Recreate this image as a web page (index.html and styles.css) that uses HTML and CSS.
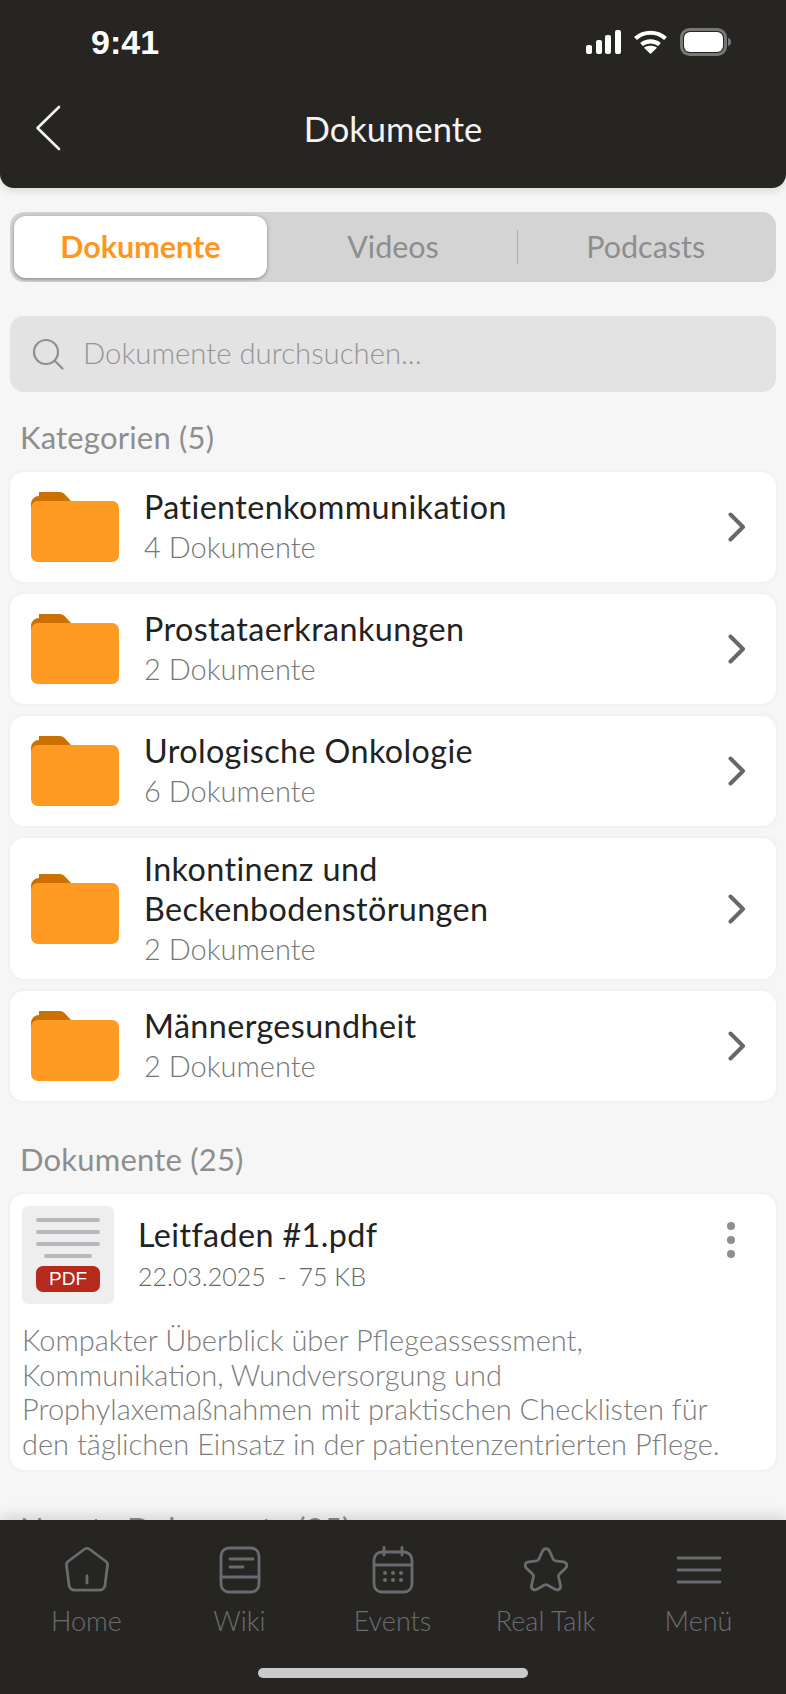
FILE: index.html
```html
<!DOCTYPE html>
<html lang="de">
<head>
    <meta charset="UTF-8">
    <meta name="viewport" content="width=device-width, initial-scale=1.0">
    <title>Dokumente</title>
    <link rel="stylesheet" href="styles.css">
</head>
<body>
    <div class="app">
        <header class="header">
            <div class="status-bar">
                <span class="time">9:41</span>
                <div class="status-icons">
                    <svg width="35" height="24" viewBox="0 0 35 24" fill="#fff">
                        <rect x="0" y="15" width="6" height="9" rx="2"/>
                        <rect x="10" y="10" width="6" height="14" rx="2"/>
                        <rect x="19" y="5" width="6" height="19" rx="2"/>
                        <rect x="29" y="0" width="6" height="24" rx="2"/>
                    </svg>
                    <svg width="33" height="24" viewBox="0 0 33 24" fill="none" stroke="#fff" stroke-width="4.200">
                        <path d="M1.500 8.500C10 .8 23 .8 31.500 8.500"/>
                        <path d="M7.500 14.500C12.500 10.300 20.500 10.300 25.500 14.500"/>
                        <path d="M16.500 24L10 17.800C13.500 15.200 19.500 15.200 23 17.800Z" fill="#fff" stroke="none"/>
                    </svg>
                    <svg width="52" height="28" viewBox="0 0 52 28">
                        <rect x="1.500" y="1.500" width="44" height="25" rx="8" fill="none" stroke="#77777a" stroke-width="3"/>
                        <rect x="4" y="4" width="39" height="20" rx="6" fill="#fff"/>
                        <path d="M48 10c2 .5 3 2 3 4s-1 3.500-3 4z" fill="#77777a"/>
                    </svg>
                </div>
            </div>
            <div class="title-bar">
                <svg class="back" width="26" height="46" viewBox="0 0 26 46" fill="none" stroke="#f4f4f4" stroke-width="2.600" stroke-linecap="round" stroke-linejoin="round">
                    <path d="M24 2L2.500 23L24 44"/>
                </svg>
                <h1 class="page-title">Dokumente</h1>
            </div>
        </header>

        <main class="content">
            <div class="segments">
                <div class="segment active">Dokumente</div>
                <div class="segment">Videos</div>
                <div class="segment with-divider">Podcasts</div>
            </div>

            <div class="search">
                <svg width="32" height="32" viewBox="0 0 32 32" fill="none" stroke="#8f8f8f" stroke-width="2.200" stroke-linecap="round">
                    <circle cx="14" cy="14" r="12"/>
                    <path d="M23 23L30.500 30.500"/>
                </svg>
                <span class="search-text">Dokumente durchsuchen...</span>
            </div>

            <h2 class="section-label">Kategorien (5)</h2>
            <div class="category-list">
                <div class="category">
                    <svg class="folder" width="88" height="70" viewBox="0 0 88 70"><use href="#folder-icon"/></svg>
                    <div class="category-text">
                        <div class="category-name">Patientenkommunikation</div>
                        <div class="category-count">4 Dokumente</div>
                    </div>
                    <svg class="chevron" width="18" height="30" viewBox="0 0 18 30"><use href="#chevron-icon"/></svg>
                </div>
                <div class="category">
                    <svg class="folder" width="88" height="70" viewBox="0 0 88 70"><use href="#folder-icon"/></svg>
                    <div class="category-text">
                        <div class="category-name">Prostataerkrankungen</div>
                        <div class="category-count">2 Dokumente</div>
                    </div>
                    <svg class="chevron" width="18" height="30" viewBox="0 0 18 30"><use href="#chevron-icon"/></svg>
                </div>
                <div class="category">
                    <svg class="folder" width="88" height="70" viewBox="0 0 88 70"><use href="#folder-icon"/></svg>
                    <div class="category-text">
                        <div class="category-name">Urologische Onkologie</div>
                        <div class="category-count">6 Dokumente</div>
                    </div>
                    <svg class="chevron" width="18" height="30" viewBox="0 0 18 30"><use href="#chevron-icon"/></svg>
                </div>
                <div class="category">
                    <svg class="folder" width="88" height="70" viewBox="0 0 88 70"><use href="#folder-icon"/></svg>
                    <div class="category-text">
                        <div class="category-name">Inkontinenz und<br>Beckenbodenstörungen</div>
                        <div class="category-count">2 Dokumente</div>
                    </div>
                    <svg class="chevron" width="18" height="30" viewBox="0 0 18 30"><use href="#chevron-icon"/></svg>
                </div>
                <div class="category">
                    <svg class="folder" width="88" height="70" viewBox="0 0 88 70"><use href="#folder-icon"/></svg>
                    <div class="category-text">
                        <div class="category-name">Männergesundheit</div>
                        <div class="category-count">2 Dokumente</div>
                    </div>
                    <svg class="chevron" width="18" height="30" viewBox="0 0 18 30"><use href="#chevron-icon"/></svg>
                </div>
            </div>

            <h2 class="section-label docs-label">Dokumente (25)</h2>
            <div class="doc-card">
                <div class="doc-top">
                    <div class="doc-thumb">
                        <span class="thumb-line"></span>
                        <span class="thumb-line"></span>
                        <span class="thumb-line"></span>
                        <span class="thumb-line short"></span>
                        <span class="pdf-badge">PDF</span>
                    </div>
                    <div class="doc-info">
                        <div class="doc-name">Leitfaden #1.pdf</div>
                        <div class="doc-meta">22.03.2025 <span class="sep">-</span> 75 KB</div>
                    </div>
                    <div class="dots"><span></span><span></span><span></span></div>
                </div>
                <p class="doc-desc">Kompakter Überblick über Pflegeassessment, Kommunikation, Wundversorgung und Prophylaxemaßnahmen mit praktischen Checklisten für den täglichen Einsatz in der patientenzentrierten Pflege.</p>
            </div>

            <h2 class="section-label docs-label">Neuste Dokumente (25)</h2>
        </main>

        <nav class="tabbar">
            <div class="tabs">
                <div class="tab">
                    <svg width="48" height="48" viewBox="0 0 48 48"><path d="M21 3.500a5 5 0 0 1 6 0L43 15.500a4 4 0 0 1 1.500 3.700l-2.500 20a6 6 0 0 1-6 5H12a6 6 0 0 1-6-5l-2.500-20A4 4 0 0 1 5 15.500z"/><path d="M24 30v7"/></svg>
                    <span>Home</span>
                </div>
                <div class="tab">
                    <svg width="48" height="48" viewBox="0 0 48 48"><rect x="5" y="2" width="38" height="44" rx="8"/><path d="M5 31H43M14 13H37M14 21H27"/></svg>
                    <span>Wiki</span>
                </div>
                <div class="tab">
                    <svg width="48" height="48" viewBox="0 0 48 48"><rect x="5" y="6" width="38" height="40" rx="8"/><path d="M5 19H43M15 1.500V9M33 1.500V9"/><g class="cal-dots"><circle cx="16" cy="27" r="2"/><circle cx="24" cy="27" r="2"/><circle cx="32" cy="27" r="2"/><circle cx="16" cy="34" r="2"/><circle cx="24" cy="34" r="2"/><circle cx="32" cy="34" r="2"/></g></svg>
                    <span>Events</span>
                </div>
                <div class="tab">
                    <svg width="48" height="48" viewBox="0 0 48 48"><path d="M20.500 5c1.500-3 5.500-3 7 0l3.500 8a3 3 0 0 0 2.500 1.800l8 1c3.300.5 4.500 4 2 6.500l-6 5.700a3 3 0 0 0-1 2.800l2 8.700c.7 3.200-2.500 5.500-5.500 3.800l-7.500-4.300a3 3 0 0 0-3 0l-7.500 4.300c-3 1.700-6.200-.6-5.500-3.800l2-8.700a3 3 0 0 0-1-2.800l-6-5.700c-2.500-2.500-1.300-6 2-6.500l8-1a3 3 0 0 0 2.500-1.800z"/></svg>
                    <span>Real Talk</span>
                </div>
                <div class="tab">
                    <svg width="48" height="48" viewBox="0 0 48 48"><path d="M3 12H45M3 24H45M3 36H45"/></svg>
                    <span>Menü</span>
                </div>
            </div>
            <div class="home-indicator"></div>
        </nav>
    </div>

    <svg class="defs" width="0" height="0">
        <defs>
            <g id="folder-icon">
                <path d="M0 12a8 8 0 0 1 8-8V0h21a6 6 0 0 1 4 1.500L40 9H30V20H0z" fill="#cc7000"/>
                <rect x="0" y="9" width="88" height="61" rx="7" fill="#ff9a22"/>
            </g>
            <path id="chevron-icon" d="M2.500 2.500L15 15L2.500 27.500" fill="none" stroke="#66686c" stroke-width="4" stroke-linecap="round" stroke-linejoin="round"/>
        </defs>
    </svg>
</body>
</html>
```

FILE: styles.css
```css
* {
    box-sizing: border-box;
}

body {
    margin: 0;
    background-color: #f6f6f6;
    font-family: 'Lato', 'Liberation Sans', sans-serif;
}

.app {
    display: flex;
    flex-direction: column;
    height: 1694px;
    overflow: hidden;
}

.defs {
    display: block;
}

/* Top bar */
.header {
    height: 188px;
    flex-shrink: 0;
    background-color: #262522;
    border-radius: 0 0 14px 14px;
    box-shadow: 0 3px 8px rgba(0, 0, 0, 0.12);
}

.status-bar {
    display: flex;
    justify-content: space-between;
    align-items: center;
    height: 64px;
    padding: 20px 54px 0 91px;
}

.time {
    font-family: 'Liberation Sans', sans-serif;
    font-weight: 700;
    font-size: 34px;
    color: #fff;
}

.status-icons {
    display: flex;
    align-items: center;
    gap: 13px;
}

.title-bar {
    display: grid;
    grid-template-columns: 1fr auto 1fr;
    align-items: center;
    height: 66px;
    margin-top: 31px;
    padding: 0 35px;
}

.page-title {
    margin: 0;
    font-size: 34.500px;
    font-weight: 400;
    color: #f4f4f4;
}

/* Scrolling area */
.content {
    flex: 1;
    min-height: 0;
    padding: 24px 10px 0;
}

.segments {
    display: flex;
    align-items: center;
    height: 70px;
    padding: 4px;
    background-color: #d4d4d4;
    border-radius: 14px;
}

.segment {
    flex: 1;
    display: flex;
    align-items: center;
    justify-content: center;
    height: 100%;
    padding-bottom: 2px;
    font-size: 30.500px;
    color: #8e8e8e;
}

.segment.active {
    background-color: #fff;
    border-radius: 12px;
    color: #ff961e;
    font-weight: 700;
    box-shadow: 0 2px 3px rgba(0, 0, 0, 0.2), 0 0 4px rgba(0, 0, 0, 0.2);
}

.with-divider {
    position: relative;
}

.with-divider::before {
    content: "";
    position: absolute;
    left: -2px;
    top: 14px;
    bottom: 14px;
    width: 1px;
    background-color: #ababab;
}

.search {
    display: flex;
    align-items: center;
    gap: 19px;
    height: 76px;
    margin-top: 34px;
    padding-left: 22px;
    background-color: #e3e3e3;
    border-radius: 14px;
}

.search-text {
    margin-top: -3px;
    font-size: 29.300px;
    font-weight: 300;
    color: #959595;
}

.section-label {
    margin: 27px 0 17px 10px;
    font-size: 31px;
    line-height: 36px;
    letter-spacing: 0.2px;
    font-weight: 400;
    color: #8e8e8e;
}

.category-list {
    display: flex;
    flex-direction: column;
    gap: 12px;
}

.category {
    display: flex;
    align-items: center;
    min-height: 110px;
    padding: 10.500px 30px 10.500px 21px;
    background-color: #fff;
    border-radius: 14px;
    box-shadow: 0 0 4px rgba(0, 0, 0, 0.06);
}

.folder {
    flex-shrink: 0;
}

.category-text {
    flex: 1;
    margin-left: 25px;
}

.category-name {
    font-size: 32.300px;
    line-height: 40px;
    letter-spacing: 0.4px;
    color: #222;
}

.category-count {
    font-size: 29px;
    line-height: 40px;
    font-weight: 300;
    color: #777;
}

.docs-label {
    margin-top: 40px;
}

.doc-card {
    padding: 12px 12px 9px;
    background-color: #fff;
    border-radius: 14px;
    box-shadow: 0 0 4px rgba(0, 0, 0, 0.06);
}

.doc-top {
    display: flex;
}

.doc-thumb {
    display: flex;
    flex-direction: column;
    align-items: center;
    width: 92px;
    height: 98px;
    padding-top: 12px;
    background-color: #eee;
    border-radius: 6px;
}

.thumb-line {
    width: 64px;
    height: 4px;
    margin-bottom: 8px;
    background-color: #b9b9bd;
    border-radius: 2px;
}

.thumb-line.short {
    width: 48px;
}

.pdf-badge {
    width: 64px;
    height: 26px;
    background-color: #b52a1b;
    border-radius: 7px;
    color: #fff;
    font-family: 'Liberation Sans', sans-serif;
    font-size: 19px;
    line-height: 26px;
    text-align: center;
}

.doc-info {
    flex: 1;
    margin-left: 24px;
    padding-top: 9px;
}

.doc-name {
    font-size: 32.300px;
    line-height: 40px;
    letter-spacing: 0.4px;
    color: #222;
}

.doc-meta {
    margin-top: 3px;
    font-size: 25px;
    line-height: 36px;
    font-weight: 300;
    color: #666;
}

.sep {
    margin: 0 5px;
}

.dots {
    display: flex;
    flex-direction: column;
    gap: 6px;
    margin: 16px 29px 0 0;
}

.dots span {
    width: 8px;
    height: 8px;
    background-color: #8e8e8e;
    border-radius: 50%;
}

.doc-desc {
    margin: 19px 0 0;
    padding-right: 20px;
    font-size: 29px;
    line-height: 34.500px;
    font-weight: 300;
    color: #7c7c7c;
}

/* Bottom tabs */
.tabbar {
    position: relative;
    flex-shrink: 0;
    height: 174px;
    padding: 26px 10px 0;
    background-color: #262522;
    box-shadow: 0 -4px 14px rgba(0, 0, 0, 0.14);
}

.tabs {
    display: grid;
    grid-template-columns: repeat(5, 153px);
}

.tab {
    display: flex;
    flex-direction: column;
    align-items: center;
    gap: 10px;
    font-size: 27px;
    font-weight: 300;
    line-height: 34px;
    color: #6a6d72;
}

.tab svg {
    fill: none;
    stroke: #686b70;
    stroke-width: 2.800;
    stroke-linecap: round;
    stroke-linejoin: round;
}

.tab .cal-dots {
    fill: #686b70;
    stroke: none;
}

.home-indicator {
    width: 270px;
    height: 10px;
    margin: 30px auto 0;
    background-color: #c9cacc;
    border-radius: 5px;
}
```
